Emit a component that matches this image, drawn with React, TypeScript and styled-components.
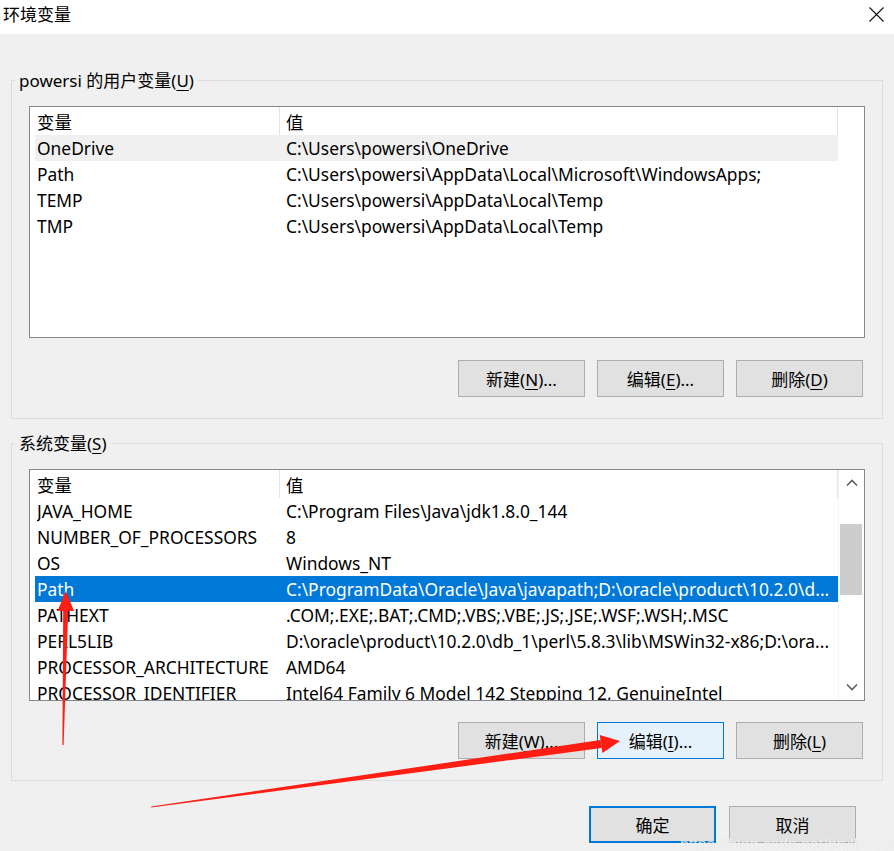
import React from 'react';
import styled, { createGlobalStyle } from 'styled-components';

const GlobalStyle = createGlobalStyle`
  html, body {
    margin: 0;
    padding: 0;
  }
  body {
    font-family: "Noto Sans", "Noto Sans CJK SC", sans-serif;
    background: #f0f0f0;
    color: #000;
  }
`;

const Window = styled.div`
  position: relative;
  width: 894px;
  height: 851px;
  overflow: hidden;
  background: #f0f0f0;
  display: flex;
  flex-direction: column;
`;

const TitleBar = styled.div`
  height: 34px;
  box-sizing: border-box;
  background: #ffffff;
  display: flex;
  align-items: center;
  justify-content: space-between;
  padding: 0 10px 5px 3px;
`;

const TitleText = styled.span`
  font-size: 17px;
  line-height: 22px;
  color: #000;
`;

const Body = styled.div`
  padding: 0 11px;
  display: flex;
  flex-direction: column;
`;

const GroupBox = styled.section<{ $top: number }>`
  margin-top: ${p => p.$top}px;
  border: 1px solid #dcdcdc;
  padding: 0 17px 21px 17px;
  display: flex;
  flex-direction: column;
`;

const GroupTitle = styled.div`
  align-self: flex-start;
  margin: -12px 0 0 -14px;
  padding: 0 4px;
  background: #f0f0f0;
  font-size: 17px;
  line-height: 24px;
`;

const ListView = styled.div`
  margin-top: 13px;
  height: 232px;
  box-sizing: border-box;
  border: 1px solid #828790;
  background: #ffffff;
  display: flex;
  overflow: hidden;
`;

const Table = styled.div`
  width: 808px;
  display: flex;
  flex-direction: column;
`;

const Header = styled.div`
  display: flex;
  height: 28px;
  flex-shrink: 0;
`;

const HeaderCell = styled.div<{ $width: number; $pad: number }>`
  width: ${p => p.$width}px;
  box-sizing: border-box;
  padding-left: ${p => p.$pad}px;
  border-right: 1px solid #e5e5e5;
  font-size: 17.4px;
  line-height: 30px;
  color: #000;
`;

const Rows = styled.div`
  padding-left: 5px;
  display: flex;
  flex-direction: column;
`;

const Row = styled.div<{ $state?: 'selected' | 'hover' }>`
  display: grid;
  grid-template-columns: 249px 1fr;
  padding-left: 2px;
  height: 26px;
  flex-shrink: 0;
  font-size: 17.4px;
  line-height: 26px;
  white-space: nowrap;
  background: ${p => (p.$state === 'selected' ? '#0078d7' : p.$state === 'hover' ? '#f0f0f0' : 'transparent')};
  color: ${p => (p.$state === 'selected' ? '#ffffff' : '#000000')};
`;

const Cell = styled.span`
  overflow: hidden;
`;

const ScrollBar = styled.div`
  width: 26px;
  display: flex;
  flex-direction: column;
  background: #ffffff;
  border-left: 1px solid #f4f4f4;
  box-sizing: border-box;
`;

const ScrollArrow = styled.div`
  height: 26px;
  display: flex;
  align-items: center;
  justify-content: center;
  flex-shrink: 0;
`;

const Track = styled.div`
  flex: 1;
  padding: 28px 2px 0 1px;
`;

const Thumb = styled.div`
  height: 71px;
  background: #cdcdcd;
`;

const ButtonRow = styled.div<{ $top: number; $right: number; $gap: number }>`
  margin-top: ${p => p.$top}px;
  padding-right: ${p => p.$right}px;
  display: flex;
  justify-content: flex-end;
  gap: ${p => p.$gap}px;
`;

const Button = styled.button<{ $look?: 'hot' | 'default' }>`
  width: 127px;
  height: 37px;
  box-sizing: border-box;
  margin: 0;
  padding: 0;
  font-family: "Noto Sans", "Noto Sans CJK SC", sans-serif;
  font-size: 17px;
  color: #000;
  background: ${p => (p.$look === 'hot' ? '#e5f1fb' : '#e1e1e1')};
  border: ${p =>
    p.$look === 'hot' ? '1px solid #0078d7' : p.$look === 'default' ? '2px solid #0078d7' : '1px solid #adadad'};
`;

const Key = styled.span`
  text-decoration: underline;
  text-underline-offset: 3px;
  text-decoration-thickness: 1px;
`;

const Annotations = styled.svg`
  position: absolute;
  left: 0;
  top: 0;
  pointer-events: none;
`;

const Watermark = styled.div`
  position: absolute;
  left: 680px;
  top: 836px;
  font-family: "Liberation Sans", sans-serif;
  font-size: 16px;
  color: rgba(255, 255, 255, 0.75);
  text-shadow: 0 0 1px rgba(120, 120, 120, 0.25);
  white-space: nowrap;
`;

type Variable = { name: string; value: string };

const userVars: Variable[] = [
  { name: 'OneDrive', value: 'C:\\Users\\powersi\\OneDrive' },
  { name: 'Path', value: 'C:\\Users\\powersi\\AppData\\Local\\Microsoft\\WindowsApps;' },
  { name: 'TEMP', value: 'C:\\Users\\powersi\\AppData\\Local\\Temp' },
  { name: 'TMP', value: 'C:\\Users\\powersi\\AppData\\Local\\Temp' },
];

const systemVars: Variable[] = [
  { name: 'JAVA_HOME', value: 'C:\\Program Files\\Java\\jdk1.8.0_144' },
  { name: 'NUMBER_OF_PROCESSORS', value: '8' },
  { name: 'OS', value: 'Windows_NT' },
  { name: 'Path', value: 'C:\\ProgramData\\Oracle\\Java\\javapath;D:\\oracle\\product\\10.2.0\\d...' },
  { name: 'PATHEXT', value: '.COM;.EXE;.BAT;.CMD;.VBS;.VBE;.JS;.JSE;.WSF;.WSH;.MSC' },
  { name: 'PERL5LIB', value: 'D:\\oracle\\product\\10.2.0\\db_1\\perl\\5.8.3\\lib\\MSWin32-x86;D:\\ora...' },
  { name: 'PROCESSOR_ARCHITECTURE', value: 'AMD64' },
  { name: 'PROCESSOR_IDENTIFIER', value: 'Intel64 Family 6 Model 142 Stepping 12, GenuineIntel' },
];

const VarList: React.FC<{ vars: Variable[]; active: string; state: 'selected' | 'hover'; scroll?: boolean }> = ({
  vars,
  active,
  state,
  scroll,
}) => (
  <ListView>
    <Table>
      <Header>
        <HeaderCell $width={250} $pad={7}>变量</HeaderCell>
        <HeaderCell $width={558} $pad={6}>值</HeaderCell>
      </Header>
      <Rows>
        {vars.map(v => (
          <Row key={v.name} $state={v.name === active ? state : undefined}>
            <Cell>{v.name}</Cell>
            <Cell>{v.value}</Cell>
          </Row>
        ))}
      </Rows>
    </Table>
    {scroll && (
      <ScrollBar>
        <ScrollArrow>
          <svg width="12" height="8" viewBox="0 0 12 8">
            <path d="M1 6.5 L6 1.5 L11 6.5" fill="none" stroke="#606060" strokeWidth="1.6" />
          </svg>
        </ScrollArrow>
        <Track>
          <Thumb />
        </Track>
        <ScrollArrow>
          <svg width="12" height="8" viewBox="0 0 12 8">
            <path d="M1 1.5 L6 6.5 L11 1.5" fill="none" stroke="#606060" strokeWidth="1.6" />
          </svg>
        </ScrollArrow>
      </ScrollBar>
    )}
  </ListView>
);

const App: React.FC = () => (
  <>
    <GlobalStyle />
    <Window>
      <TitleBar>
        <TitleText>环境变量</TitleText>
        <svg width="15" height="15" viewBox="0 0 15 15">
          <path d="M0.5 0.5 L14.5 14.5 M14.5 0.5 L0.5 14.5" stroke="#111" strokeWidth="1.1" />
        </svg>
      </TitleBar>
      <Body>
        <GroupBox $top={46}>
          <GroupTitle>
            powersi 的用户变量(<Key>U</Key>)
          </GroupTitle>
          <VarList vars={userVars} active="OneDrive" state="hover" />
          <ButtonRow $top={22} $right={2} $gap={12}>
            <Button>
              新建(<Key>N</Key>)...
            </Button>
            <Button>
              编辑(<Key>E</Key>)...
            </Button>
            <Button>
              删除(<Key>D</Key>)
            </Button>
          </ButtonRow>
        </GroupBox>
        <GroupBox $top={24}>
          <GroupTitle>
            系统变量(<Key>S</Key>)
          </GroupTitle>
          <VarList vars={systemVars} active="Path" state="selected" scroll />
          <ButtonRow $top={21} $right={2} $gap={12}>
            <Button>
              新建(<Key>W</Key>)...
            </Button>
            <Button $look="hot">
              编辑(<Key>I</Key>)...
            </Button>
            <Button>
              删除(<Key>L</Key>)
            </Button>
          </ButtonRow>
        </GroupBox>
      </Body>
      <ButtonRow $top={25} $right={38} $gap={13}>
        <Button $look="default">确定</Button>
        <Button>取消</Button>
      </ButtonRow>
      <Watermark>https://blog.csdn.net/bryllevson</Watermark>
      <Annotations width="894" height="851" viewBox="0 0 894 851">
        <polygon points="63,745 62.4,745 63.2,610 68.2,610 63.6,745" fill="#ff1e14" />
        <polygon points="66,591 74,611 57.5,611" fill="#ff1e14" />
        <polygon points="151,807.6 151.4,806.4 600.4,740 601.6,748" fill="#ff1e14" />
        <polygon points="620,741 599.7,735 602.4,753" fill="#ff1e14" />
      </Annotations>
    </Window>
  </>
);

export default App;
